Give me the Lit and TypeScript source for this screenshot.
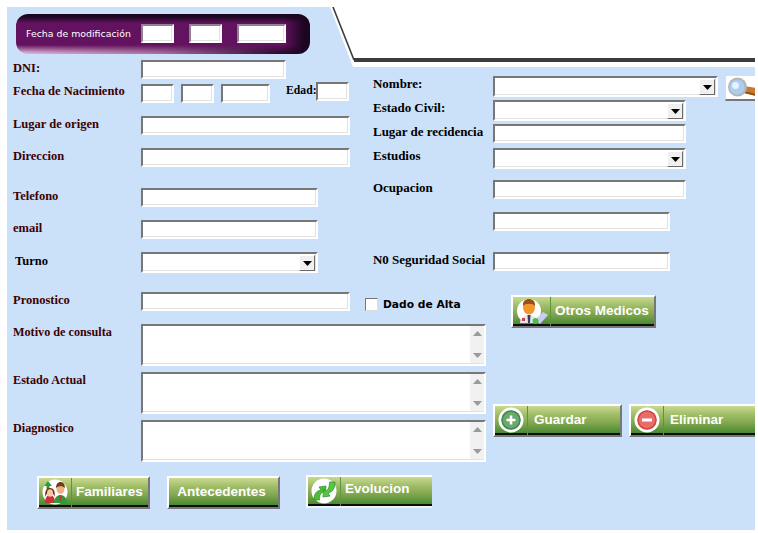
import { LitElement, html, css, svg } from "lit";
import { customElement } from "lit/decorators.js";

const arrow = html`<div class="drop"><svg width="9" height="5" viewBox="0 0 9 5"><path d="M0 0h9L4.500 5z" fill="#000"/></svg></div>`;
const sel = (cls: string) => html`<div class="box sel ${cls}"><div class="fill"></div>${arrow}</div>`;
const inp = (cls: string) => html`<input class="box ${cls}" type="text" />`;
const area = () => html`<div class="box area"><div class="fill"></div><div class="sb">
  <svg width="9" height="5" viewBox="0 0 9 5"><path d="M0 5h9L4.500 0z" fill="#9a9a9a"/></svg>
  <svg width="9" height="5" viewBox="0 0 9 5"><path d="M0 0h9L4.500 5z" fill="#9a9a9a"/></svg>
</div></div>`;

const icons = {
  medico: svg`<circle cx="15" cy="14" r="12" fill="#fff"/>
    <path d="M6 26c0-5 4-8 9-8s9 3 9 8z" fill="#e4e7ee"/>
    <path d="M13.500 18h3l-.5 8h-2z" fill="#34405a"/>
    <ellipse cx="15" cy="10.500" rx="6" ry="7" fill="#f0982e"/>
    <path d="M9 9c-.5-5 2.500-7 6-7s6.500 2 6 7c-2-3-10-3-12 0z" fill="#9a4f14"/>
    <rect x="8" y="21" width="3" height="3" fill="#c8454a"/>
    <path d="M21 23l8-8 5 3-8 9z" fill="#c9cdf2"/>
    <circle cx="21.500" cy="24" r="3" fill="#49c23b"/>`,
  familia: svg`<circle cx="15" cy="14" r="12.500" fill="#fff"/>
    <path d="M4 8l4-5 4 5z" fill="#2f9a3a"/>
    <rect x="6.500" y="7" width="3" height="4" fill="#2f9a3a"/>
    <path d="M5 25c0-5 2-8 5-8s5 3 5 8z" fill="#c8323a"/>
    <path d="M5.500 19c-1-6 1-9 4.500-9s5.500 3 4.500 9c-1-3-1-4-4.500-4s-3.500 1-4.500 4z" fill="#7c2a18"/>
    <ellipse cx="10" cy="15" rx="3" ry="3.800" fill="#f4c9a4"/>
    <path d="M14 25c0-5 3-8 6.500-8s6.500 3 6.500 8z" fill="#2f9a3a"/>
    <rect x="19.500" y="17" width="2" height="6" fill="#c8323a"/>
    <ellipse cx="20.500" cy="11" rx="4" ry="5" fill="#eeb083"/>
    <path d="M16 10c0-4 2-6 4.500-6s4.500 2 4.500 6c-2-2.500-7-2.500-9 0z" fill="#6b3d1c"/>`,
  evolucion: svg`<circle cx="15" cy="14" r="12.500" fill="#fff"/>
    <path d="M5 23c0-6 2-9 7-10l-2-3 7-1-.5 8-2-2c-3 1-4 3-4 8z" fill="#4fbf3a" stroke="#2a8a2a" stroke-width=".7"/>
    <path d="M26 5c0 6-2 10-7 11l2 3-7 1 .5-8 2 2c3-1 4-4 4-9z" fill="#55c83f" stroke="#2a8a2a" stroke-width=".7"/>`,
  guardar: svg`<circle cx="15" cy="14" r="12.500" fill="#fff"/>
    <circle cx="15" cy="14" r="9.500" fill="#69a96c"/>
    <circle cx="15" cy="14" r="9" fill="none" stroke="#3f8a4e" stroke-width="1.500"/>
    <path d="M15 9.500v9M10.500 14h9" stroke="#fff" stroke-width="2.600"/>`,
  eliminar: svg`<circle cx="15" cy="14" r="12.500" fill="#fff"/>
    <circle cx="15" cy="14" r="9.500" fill="#ea6c68"/>
    <circle cx="15" cy="14" r="9" fill="none" stroke="#cf4743" stroke-width="1.500"/>
    <path d="M10 14h10" stroke="#fff" stroke-width="3"/>`,
};

const btn = (label: string, cls: string, icon?: keyof typeof icons) => html`<button class="gbtn ${cls}">
  ${icon ? html`<span class="ico"><svg width="36" height="28" viewBox="0 0 36 28">${icons[icon]}</svg></span>` : ""}
  <span class="tx">${label}</span>
</button>`;

@customElement("app-root")
export class AppRoot extends LitElement {
  static styles = css`
    :host { display: block; width: 758px; height: 533px; background: #fff; overflow: hidden; }
    * { box-sizing: border-box; }
    .panel { position: relative; margin: 7px 0 0 7px; width: 748px; height: 523px; background: #cbe1f9;
      font: bold 12.500px "Liberation Serif", serif; color: #3d0000; overflow: hidden; }
    .notch { position: absolute; left: 320px; top: 0; }
    .box { display: block; margin: 0; padding: 0; height: 19px; background: #fff; border: 2px solid; border-color: #777 #fff #fff #777;
      border-radius: 0; flex: none; box-shadow: inset -1px -1px 0 #e2e2e2; }
    .w33 { width: 33px; } .w49 { width: 49px; } .w145 { width: 145px; } .w177 { width: 177px; }
    .w209 { width: 209px; } .w193 { width: 193px; } .w225 { width: 225px; }

    .pill { margin: 7px 0 0 9px; width: 294px; height: 40px; border-radius: 12px; display: flex; align-items: center;
      padding: 0 0 2px 10px; color: #fff; font: 9.400px "DejaVu Sans", sans-serif;
      background:
        linear-gradient(90deg, rgba(20,4,24,0) 91%, #1b0520 98%),
        linear-gradient(180deg, #1a0520 0, #1d0622 3px, #63125f 9px, #63125f 31px, rgba(99,18,95,0) 39px),
        linear-gradient(90deg, #dcb6d2 0, #a56c9c 50%, #2a0a2c 90%); }
    .pill .lbl { width: 115px; white-space: nowrap; }
    .pill .box { margin-right: 15px; border-color: #8f838f #fff #fff #8f838f; }

    .main { display: flex; }
    .left { width: 366px; flex: none; padding-left: 6px; }
    .right { width: 382px; flex: none; color: #000; font-size: 13px; }
    .row { display: flex; align-items: flex-start; }
    .row > .lb { width: 128px; flex: none; white-space: nowrap; line-height: 14px; padding-top: 1px; }
    .right .row > .lb { width: 120px; letter-spacing: -.03px; }
    .dni { margin-top: 6px; }
    .dob { margin-top: 3px; height: 21px; }
    .row.dob > .lb { padding-top: 2px; }
    .dob .d1 { margin-top: 2px; }
    .dob .gap7 { margin-left: 7px; }
    .edad { margin-left: 16px; width: 30px; color: #000; font-size: 11.700px; line-height: 14px; padding-top: 2px; white-space: nowrap; }
    .origen { margin-top: 13px; } .dir { margin-top: 13px; } .tel { margin-top: 21px; } .mail { margin-top: 13px; }
    .turno { margin-top: 13px; color: #000; } .row.turno > .lb { padding-left: 2px; padding-top: 2px; }
    .pron { margin-top: 19px; }

    .sel { display: flex; height: 21px; }
    .fill { flex: 1; }
    .drop { width: 16px; height: 16px; margin: 1px 1px 0 0; background: #f0f0f0; border: 1px solid; border-color: #fff #6a6a6a #6a6a6a #fff;
      display: flex; align-items: center; justify-content: center; }
    .drop svg { display: block; }

    .r-nom { margin-top: 22px; }
    .r-civ { margin-top: 3px; } .r-lug { margin-top: 3px; } .r-est { margin-top: 5px; }
    .r-ocu { margin-top: 11px; } .r-blank { margin-top: 13px; } .r-seg { margin-top: 21px; }
    .r-blank .spacer { width: 120px; flex: none; }
    .lens { margin: 0 0 -4px 7px; width: 30px; height: 25px; border: 0; border-bottom: 2px solid #777; border-left: 1px solid #ddd;
      background: #fff; padding: 1px 0 0 2px; overflow: hidden; flex: none; display: block; }
    .lens svg { display: block; }

    .bottom { display: flex; }
    .alta { display: flex; align-items: center; margin: 6px 0 0 15px; font: bold 10.700px "DejaVu Sans", sans-serif; color: #000; white-space: nowrap; height: 13px; }
    .chk { width: 13px; height: 13px; background: #fff; border: 1px solid; border-color: #777 #ddd #ddd #777; margin-right: 5px; flex: none; }

    .areas { width: 486px; flex: none; padding-left: 6px; }
    .arow { display: flex; margin-top: 6px; }
    .arow:first-child { margin-top: 13px; }
    .arow .lb { width: 128px; flex: none; font-size: 12.200px; line-height: 14px; padding-top: 1px; }
    .area { width: 345px; height: 42px; display: flex; }
    .sb { width: 14px; margin-bottom: 1px; background: #f1f1f1; display: flex; flex-direction: column; justify-content: space-between; align-items: center; padding: 5px 0; }
    .sb svg { display: block; }

    .side { flex: none; width: 262px; }
    .gbtn { display: flex; align-items: center; height: 33px; padding: 0; flex: none; border: 2px solid; border-color: #fff #777 #777 #fff;
      font: bold 13.500px "Liberation Sans", sans-serif; color: #fff; text-align: left;
      background: linear-gradient(180deg, #c9da90 0, #a0bd68 30%, #7fa64e 60%, #4a8a32 92%, #0d0d0d 93%, #0d0d0d 100%); }
    .gbtn .ico { display: flex; width: 32px; height: 29px; margin-left: 1px; border-right: 1px solid #5c9440; flex: none; overflow: hidden; }
    .gbtn .ico svg { display: block; flex: none; }
    .gbtn .tx { white-space: nowrap; padding-bottom: 2px; }
    .otros { width: 145px; }
    .otros .ico { width: 37px; }
    .otros .tx { margin-left: 4px; }
    .guardar { width: 129px; } .guardar .tx { margin-left: 6px; }
    .eliminar { width: 126px; border-right: 0; } .eliminar .tx { margin-left: 6px; }
    .otros-wrap { margin: -16px 0 0 18px; }
    .acts { display: flex; gap: 7px; margin: 76px 0 0 0; }
    .foot { display: flex; margin: 14px 0 0 30px; align-items: flex-start; }
    .fam { width: 113px; } .fam .tx { margin-left: 4px; }
    .ant { width: 113px; margin-left: 17px; justify-content: center; padding-right: 4px; }
    .evo { width: 126px; margin: -1px 0 0 26px; border-right: 0; border-bottom-color: #eef2f6; }
    .evo .tx { margin-left: 4px; padding-bottom: 6px; }
  `;

  render() {
    return html`<div class="panel">
      <svg class="notch" width="428" height="60" viewBox="0 0 428 60">
        <path d="M3 0H428V60H26z" fill="#fff"/>
        <path d="M6 0L27 53" fill="none" stroke="#3c3c3c" stroke-width="1.600"/>
        <path d="M27 53H428" fill="none" stroke="#3c3c3c" stroke-width="4"/>
      </svg>
      <div class="pill">
        <span class="lbl">Fecha de modificación</span>
        ${inp("w33")}${inp("w33")}${inp("w49")}
      </div>
      <div class="main">
        <div class="left">
          <div class="row dni"><span class="lb">DNI:</span>${inp("w145")}</div>
          <div class="row dob"><span class="lb">Fecha de Nacimiento</span>${inp("w33 d1")}${inp("w33 d1 gap7")}${inp("w49 d1 gap7")}<span class="edad">Edad:</span>${inp("w33")}</div>
          <div class="row origen"><span class="lb">Lugar de origen</span>${inp("w209")}</div>
          <div class="row dir"><span class="lb">Direccion</span>${inp("w209")}</div>
          <div class="row tel"><span class="lb">Telefono</span>${inp("w177")}</div>
          <div class="row mail"><span class="lb">email</span>${inp("w177")}</div>
          <div class="row turno"><span class="lb">Turno</span>${sel("w177")}</div>
          <div class="row pron"><span class="lb">Pronostico</span>${inp("w209")}
            <label class="alta"><span class="chk"></span>Dado de Alta</label></div>
        </div>
        <div class="right">
          <div class="row r-nom"><span class="lb">Nombre:</span>${sel("w225")}
            <button class="lens" aria-label="Buscar"><svg width="28" height="22" viewBox="0 0 28 22">
              <path d="M16 9l12 2v8l-12-3z" fill="#c9792e"/>
              <path d="M16 14l12 3v2l-12-3z" fill="#8f5020"/>
              <circle cx="9.500" cy="10" r="9.500" fill="#b5b5b5"/>
              <circle cx="9" cy="10" r="7.500" fill="#a9cdf5"/>
              <circle cx="7.500" cy="8.500" r="3.500" fill="#e8f3ff"/>
            </svg></button></div>
          <div class="row r-civ"><span class="lb">Estado Civil:</span>${sel("w193")}</div>
          <div class="row r-lug"><span class="lb">Lugar de recidencia</span>${inp("w193")}</div>
          <div class="row r-est"><span class="lb">Estudios</span>${sel("w193")}</div>
          <div class="row r-ocu"><span class="lb">Ocupacion</span>${inp("w193")}</div>
          <div class="row r-blank"><span class="spacer"></span>${inp("w177")}</div>
          <div class="row r-seg"><span class="lb">N0 Seguridad Social</span>${inp("w177")}</div>
        </div>
      </div>
      <div class="bottom">
        <div class="areas">
          <div class="arow"><span class="lb">Motivo de consulta</span>${area()}</div>
          <div class="arow"><span class="lb">Estado Actual</span>${area()}</div>
          <div class="arow"><span class="lb">Diagnostico</span>${area()}</div>
        </div>
        <div class="side">
          <div class="otros-wrap">${btn("Otros Medicos", "otros", "medico")}</div>
          <div class="acts">${btn("Guardar", "guardar", "guardar")}${btn("Eliminar", "eliminar", "eliminar")}</div>
        </div>
      </div>
      <div class="foot">
        ${btn("Familiares", "fam", "familia")}${btn("Antecedentes", "ant")}${btn("Evolucion", "evo", "evolucion")}
      </div>
    </div>`;
  }
}
